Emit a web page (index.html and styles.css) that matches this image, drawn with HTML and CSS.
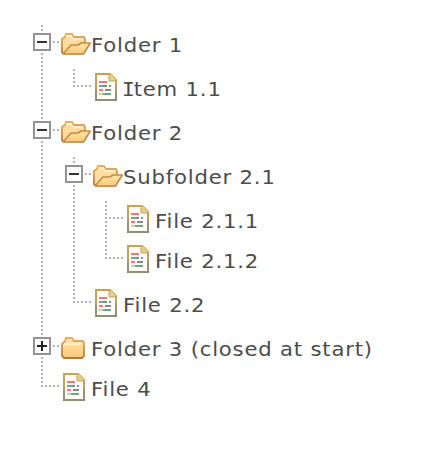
FILE: index.html
```html
<!DOCTYPE html>
<html lang="en">
<head>
<meta charset="utf-8">
<title>Folder tree</title>
<link rel="stylesheet" href="styles.css">
</head>
<body>
<svg class="sprite" aria-hidden="true">
  <defs>
    <linearGradient id="fill" x1="0" y1="0" x2="0" y2="1"><stop offset="0" stop-color="#ffe6b0"/><stop offset="1" stop-color="#fdc872"/></linearGradient>
    <linearGradient id="edge" x1="0" y1="0" x2="0" y2="1"><stop offset="0" stop-color="#dfb069"/><stop offset="1" stop-color="#b9752f"/></linearGradient>
    <linearGradient id="paper" x1="0" y1="0" x2="0" y2="1"><stop offset="0" stop-color="#c5a352"/><stop offset=".55" stop-color="#b9a25f"/><stop offset=".62" stop-color="#99957a"/><stop offset="1" stop-color="#928e76"/></linearGradient>
    <symbol id="open" viewBox="0 0 30 22">
      <path d="M1 19V6L4 4L5 1H11L13 4H23L24 6V11L22 20.5H2Z" fill="#ffdda0" stroke="url(#edge)" stroke-width="1.8"/>
      <path d="M5 3H10L12 6H22" fill="none" stroke="#fff2d6" stroke-width="1.6"/>
      <path d="M2.5 20.5L10 12H17L20 10H29.3L22.5 21H3Z" fill="url(#fill)" stroke="#c68a42" stroke-width="1.6" stroke-linejoin="round"/>
    </symbol>
    <symbol id="closed" viewBox="0 0 24 22">
      <path d="M1 7L4 4L5 1H11L13 4H22L23 6V19L21 21H3L1 19Z" fill="url(#fill)" stroke="url(#edge)" stroke-width="1.8"/>
      <path d="M3 7H21" stroke="#fff2d4" stroke-width="1.6"/>
    </symbol>
    <symbol id="file" viewBox="0 0 22 28">
      <path d="M1 1H15L21 7V27H1Z" fill="#fffefa" stroke="url(#paper)" stroke-width="2"/>
      <path d="M14 1H16L21 6V8H14Z" fill="#e5d08b" stroke="#c3a75b" stroke-width="1"/>
      <path d="M4 9H12M4 17H8" stroke="#ff7378" stroke-width="2"/>
      <path d="M4 13H9M8 21H16" stroke="#69a793" stroke-width="2"/>
      <path d="M9 13H12M14 13H16M10 17H16" stroke="#8b8b80" stroke-width="2"/>
      <path d="M4 21H8" stroke="#d9cf9c" stroke-width="2"/>
    </symbol>
  </defs>
</svg>
<ul class="tree">
  <li>
    <div class="row"><span class="toggle"></span><svg class="icon open"><use href="#open"/></svg><span class="label">Folder 1</span></div>
    <ul>
      <li><div class="row"><svg class="icon file"><use href="#file"/></svg><span class="label"><span class="serif-i">I</span>tem 1.1</span></div></li>
    </ul>
  </li>
  <li>
    <div class="row"><span class="toggle"></span><svg class="icon open"><use href="#open"/></svg><span class="label">Folder 2</span></div>
    <ul>
      <li>
        <div class="row"><span class="toggle"></span><svg class="icon open"><use href="#open"/></svg><span class="label">Subfolder 2.1</span></div>
        <ul>
          <li><div class="row"><svg class="icon file"><use href="#file"/></svg><span class="label">File 2.1.1</span></div></li>
          <li><div class="row"><svg class="icon file"><use href="#file"/></svg><span class="label">File 2.1.2</span></div></li>
        </ul>
      </li>
      <li><div class="row"><svg class="icon file"><use href="#file"/></svg><span class="label">File 2.2</span></div></li>
    </ul>
  </li>
  <li>
    <div class="row"><span class="toggle plus"></span><svg class="icon closed"><use href="#closed"/></svg><span class="label">Folder 3 (closed at start)</span></div>
  </li>
  <li><div class="row"><svg class="icon file"><use href="#file"/></svg><span class="label">File 4</span></div></li>
</ul>
</body>
</html>
```
FILE: styles.css
```css
body {
  margin: 0;
  background: #fff;
  color: #4c4c4c;
  font: 20px/40px Verdana, "DejaVu Sans", sans-serif;
  letter-spacing: 0.75px;
}

.sprite {
  position: absolute;
  width: 0;
  height: 0;
}

ul {
  margin: 0;
  padding: 4px 0 4px 32px;
  list-style: none;
}

.tree {
  padding: 24px 0 0 40px;
}

/* Vertical dotted guide: 2px dots on a 4px grid */
li {
  background: repeating-linear-gradient(to bottom, transparent 0 1px, #b2b2b2 1px 3px, transparent 3px 4px) 1px 0 / 2px 100% no-repeat;
}

li:last-child {
  background-size: 2px 20px;
}

/* Horizontal dotted guide from the parent line to the icon */
.row {
  display: flex;
  align-items: flex-start;
  height: 40px;
  padding-left: 20px;
  background: repeating-linear-gradient(to right, transparent 0 1px, #b2b2b2 1px 3px, transparent 3px 4px) 0 17px / 20px 2px no-repeat;
}

.toggle {
  flex: none;
  box-sizing: border-box;
  width: 18px;
  height: 18px;
  margin: 9px 9px 0 -27px;
  border: 2px solid #949494;
  background: linear-gradient(#333, #333) center / 10px 2px no-repeat #fff;
}

.plus {
  background: linear-gradient(#222, #222) center / 10px 2px no-repeat, linear-gradient(#222, #222) center / 2px 10px no-repeat, #fff;
}

.icon {
  flex: none;
  display: block;
}

.open {
  width: 30px;
  height: 22px;
  margin: 9px 0 0 1px;
}

.closed {
  width: 24px;
  height: 22px;
  margin: 9px 6px 0 1px;
}

.file {
  width: 22px;
  height: 28px;
  margin: 5px 6px 0 3px;
}

/* Slightly widened letterforms */
.label {
  margin: 1px 0 0 -0.5px;
  white-space: nowrap;
  transform: scaleX(1.06);
  transform-origin: 0 50%;
}

/* Serifed capital I, kerned to the following letter */
.serif-i {
  margin: 0 -1px 0 -1px;
  font-family: "DejaVu Sans Mono", monospace;
  letter-spacing: 0;
}
```
